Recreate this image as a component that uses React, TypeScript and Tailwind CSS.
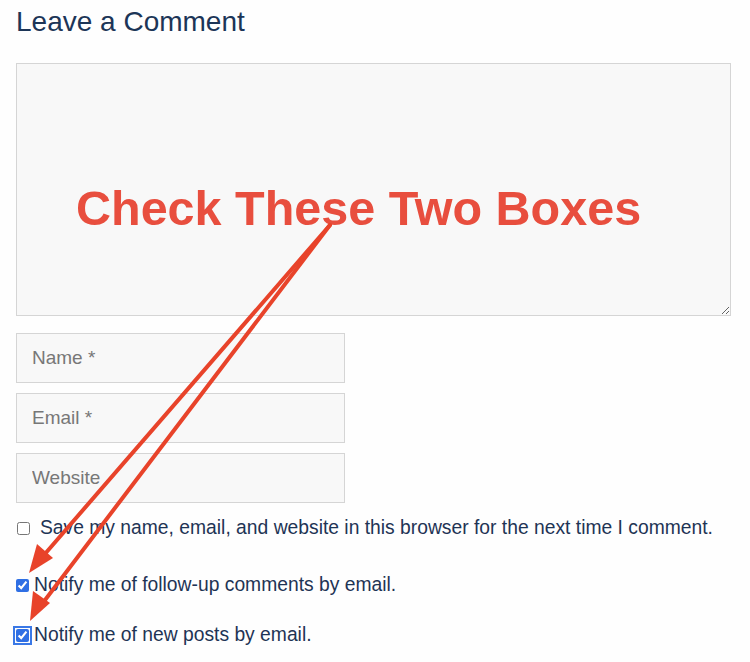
export default function App() {
  return (
    <div className="relative w-[750px] h-[662px] overflow-hidden bg-[#fefefe] px-4 font-['Liberation_Sans',Arial,sans-serif]">
      <h2 className="pt-[4px] text-[28px] leading-[36px] text-[#1c3557]">Leave a Comment</h2>

      <textarea
        className="mt-[23px] block h-[253px] w-[715px] resize-y border border-[#d5d5d5] bg-[#f8f8f8] outline-none"
        aria-label="Comment"
      />

      <div className="mt-[17px] flex flex-col gap-[10px]">
        {['Name *', 'Email *', 'Website'].map((p) => (
          <input
            key={p}
            placeholder={p}
            className="h-[50px] w-[329px] border border-[#d5d5d5] bg-[#f8f8f8] px-[15px] text-[19px] text-[#333] outline-none placeholder:text-[#777]"
          />
        ))}
      </div>

      <label className="mt-[13px] flex items-center text-[19.3px] leading-[24px] text-[#1e3455]">
        <input type="checkbox" className="ml-[1px] mr-[10px] h-[13px] w-[13px]" />
        Save my name, email, and website in this browser for the next time I comment.
      </label>

      <label className="mt-[33px] flex items-center text-[19.3px] leading-[24px] text-[#1e3455]">
        <input type="checkbox" defaultChecked className="mr-[5px] h-[13px] w-[13px] accent-[#2f6fe4]" />
        Notify me of follow-up comments by email.
      </label>

      <label className="mt-[26px] flex items-center text-[19.3px] leading-[24px] text-[#1e3455]">
        <input
          type="checkbox"
          defaultChecked
          className="mr-[5px] h-[13px] w-[13px] rounded-[2px] accent-[#2f6fe4] outline-2 outline-offset-1 outline-[#3a78e6]"
        />
        Notify me of new posts by email.
      </label>

      {/* annotation overlay */}
      <div className="pointer-events-none absolute left-[76px] top-[177px] text-[48.5px] font-bold leading-[62px] text-[#e84e3e]">
        Check These Two Boxes
      </div>
      <svg className="pointer-events-none absolute left-0 top-0" width="750" height="662" viewBox="0 0 750 662">
        <g stroke="#e8432a" strokeWidth="4" strokeLinecap="round">
          <line x1="330" y1="225" x2="44" y2="555" />
          <line x1="330" y1="225" x2="42" y2="604" />
        </g>
        <g fill="#e8432a">
          <polygon points="29,573 37,544 53,558" />
          <polygon points="30,621 33,591 50,603" />
        </g>
      </svg>
    </div>
  )
}
